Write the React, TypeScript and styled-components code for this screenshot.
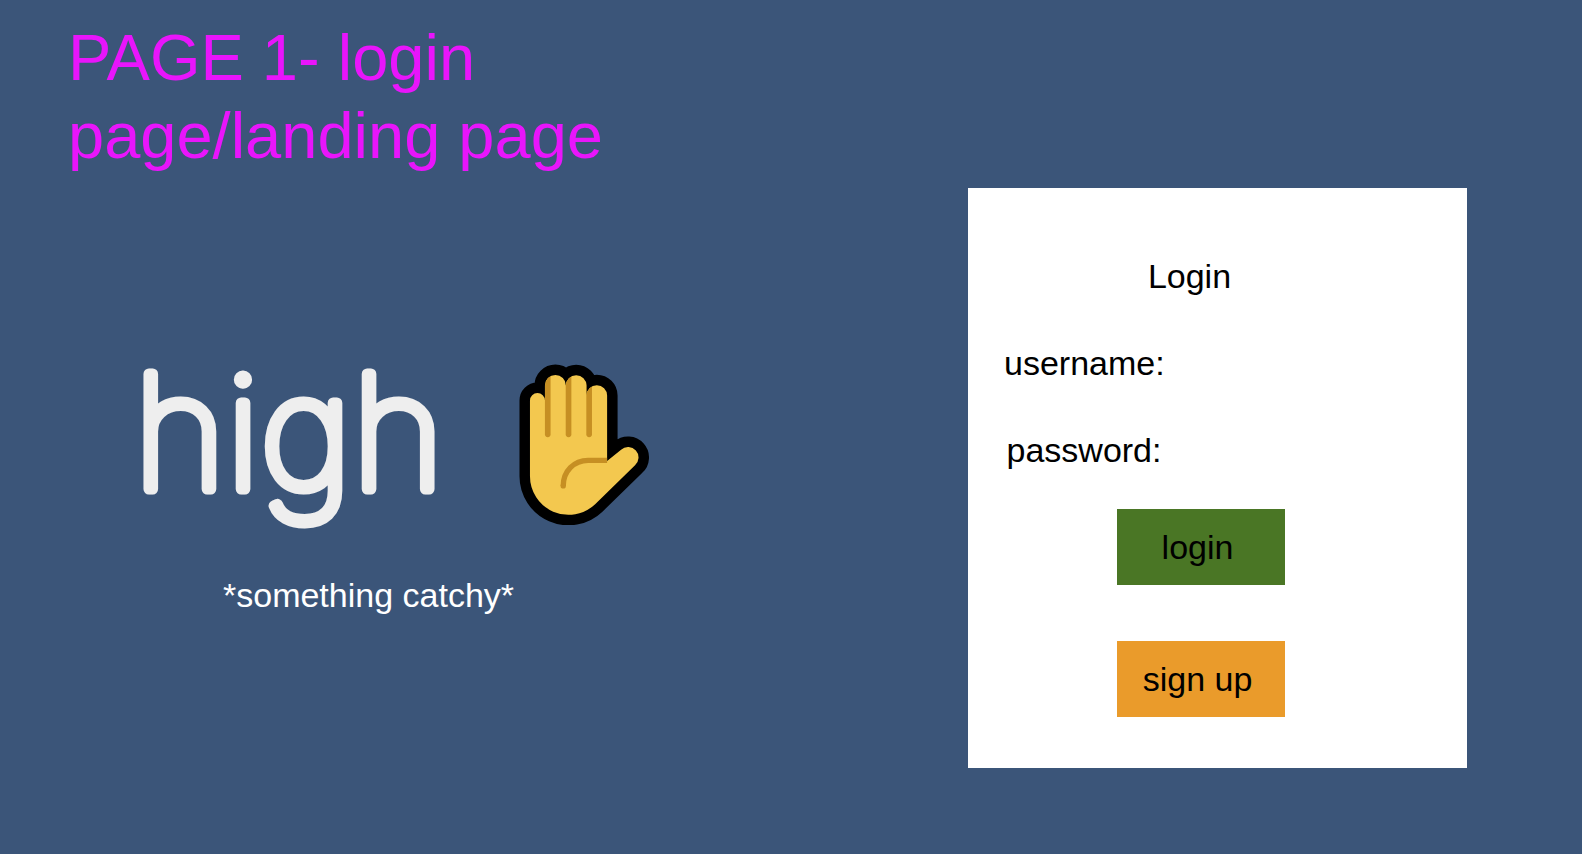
import React from "react";
import styled, { createGlobalStyle } from "styled-components";

const GlobalStyle = createGlobalStyle`
  *, *::before, *::after {
    box-sizing: border-box;
  }
  body {
    margin: 0;
    background: #3b5579;
    font-family: "Liberation Sans", Arial, sans-serif;
    font-size: 34px;
    line-height: 40px;
  }
`;

const Page = styled.main`
  display: grid;
  grid-template-columns: minmax(0, 1fr) minmax(0, 499px);
  align-items: start;
  min-height: 100vh;
  padding-right: 115px;
`;

const Intro = styled.section`
  display: flex;
  flex-direction: column;
  padding-top: 19px;
`;

const PageTitle = styled.h1`
  max-width: 560px;
  margin: 0 0 189px 68px;
  color: #e815fb;
  font-size: 65px;
  font-weight: 400;
  line-height: 78px;
`;

const Brand = styled.div`
  display: flex;
  align-items: flex-start;
  padding-left: 119px;
`;

const Wordmark = styled.svg`
  width: 400px;
  height: 161px;
  overflow: visible;

  text {
    font-family: Inter, "DejaVu Sans", sans-serif;
    font-size: 158px;
    font-weight: 100;
    text-anchor: middle;
    fill: #eeeeee;
    stroke: #eeeeee;
    stroke-width: 11px;
    stroke-linejoin: round;
  }
`;

const Hand = styled.svg`
  width: 130px;
  height: 161px;
`;

const Tagline = styled.p`
  margin: 50px 0 0;
  padding-left: 223px;
  color: #ffffff;
`;

const Card = styled.form`
  display: flex;
  flex-direction: column;
  margin-top: 188px;
  padding: 68px 34px 51px 36px;
  background: #ffffff;
  color: #000000;
`;

const CardTitle = styled.h2`
  margin: 0 0 47px;
  padding-right: 58px;
  font-size: 34px;
  font-weight: 400;
  text-align: center;
`;

const Fields = styled.div`
  display: grid;
  grid-template-columns: 160px minmax(0, 1fr);
  row-gap: 47px;
  margin-bottom: 39px;
`;

const FieldLabel = styled.label`
  text-align: center;
`;

const FieldInput = styled.input`
  width: 100%;
  height: 40px;
  padding: 0 8px;
  border: 0;
  outline: 0;
  background: transparent;
  color: inherit;
  font: inherit;
`;

const Actions = styled.div`
  display: flex;
  flex-direction: column;
  align-items: center;
  gap: 56px;
  padding-right: 36px;
`;

const ActionButton = styled.button<{ $color: string }>`
  width: 168px;
  height: 76px;
  padding: 0 6px 0 0;
  border: 0;
  background: ${({ $color }) => $color};
  color: #000000;
  font: inherit;
  cursor: pointer;
`;

const handShape =
  "M90 151a22.5 22.5 0 0 1 45 0V106a31.5 31.5 0 0 1 63 0a31 31 0 0 1 62 0V136a31 31 0 0 1 62 0V333L364 299A31 31 0 0 1 406 346L286 463A116 116 0 0 1 90 378Z";

function RaisedHand() {
  return (
    <Hand viewBox="57 42 391 483" role="img" aria-label="raised hand">
      <defs>
        <clipPath id="hand-shape">
          <path d={handShape} />
        </clipPath>
      </defs>
      <path d={handShape} fill="#000000" stroke="#000000" strokeWidth="63" strokeLinejoin="round" />
      <path d={handShape} fill="#f3c84f" />
      <g clipPath="url(#hand-shape)" fill="none" stroke="#c68f23" strokeWidth="17" strokeLinecap="round">
        <path d="M143.500 60V253" />
        <path d="M206 60V253" />
        <path d="M268 60V253" />
      </g>
      <path d="M190 408C190 364 222 331 265 331H322" fill="none" stroke="#c68f23" strokeWidth="16" />
      <circle cx="190" cy="408" r="8" fill="#c68f23" />
    </Hand>
  );
}

export default function App() {
  return (
    <>
      <GlobalStyle />
      <Page>
        <Intro>
          <PageTitle>PAGE 1- login page/landing page</PageTitle>
          <Brand>
            <Wordmark viewBox="0 0 400 161">
              <text x="170" y="125">high</text>
            </Wordmark>
            <RaisedHand />
          </Brand>
          <Tagline>*something catchy*</Tagline>
        </Intro>
        <Card onSubmit={(event) => event.preventDefault()}>
          <CardTitle>Login</CardTitle>
          <Fields>
            <FieldLabel htmlFor="username">username:</FieldLabel>
            <FieldInput id="username" type="text" autoComplete="username" />
            <FieldLabel htmlFor="password">password:</FieldLabel>
            <FieldInput id="password" type="password" autoComplete="current-password" />
          </Fields>
          <Actions>
            <ActionButton type="submit" $color="#4a7625">login</ActionButton>
            <ActionButton type="button" $color="#ea9b2b">sign up</ActionButton>
          </Actions>
        </Card>
      </Page>
    </>
  );
}
